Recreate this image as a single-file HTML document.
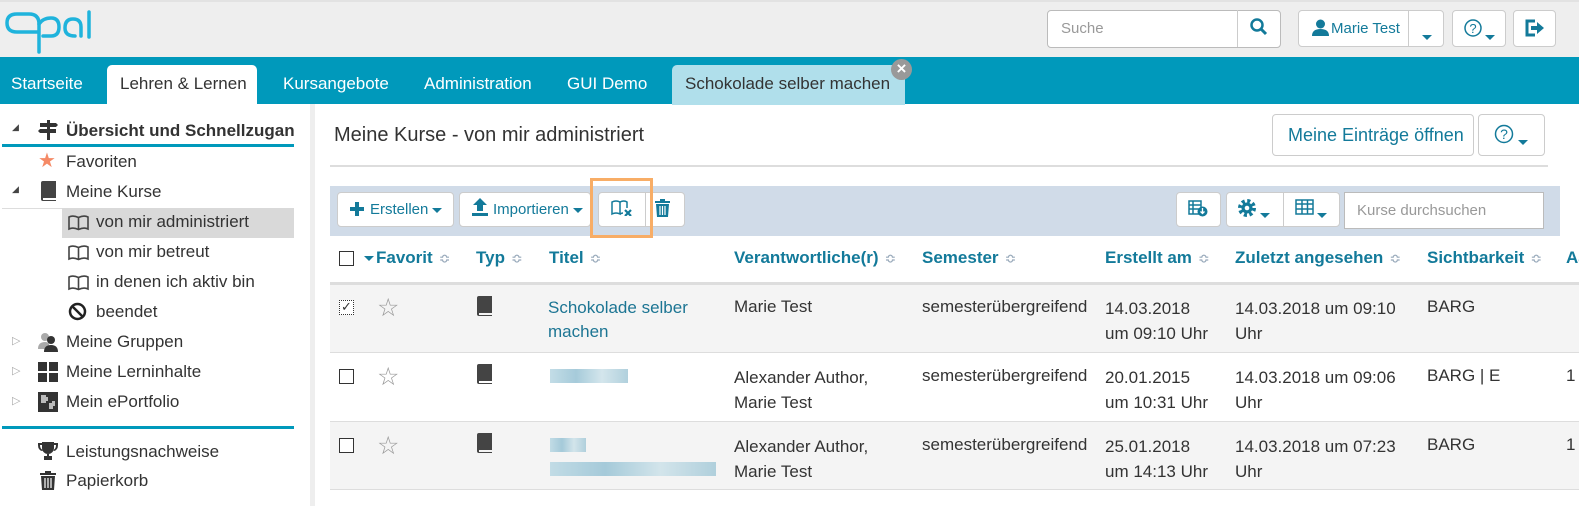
<!DOCTYPE html>
<html><head><meta charset="utf-8"><style>
*{box-sizing:border-box;margin:0;padding:0}
body{width:1579px;height:506px;overflow:hidden;background:#fff;font-family:"Liberation Sans",sans-serif;font-size:17px;color:#333;position:relative}
.a{position:absolute;white-space:nowrap}
.btn{position:absolute;background:#fff;border:1px solid #ccc;border-radius:4px}
.lk{color:#1c7593}
.th{position:absolute;top:248px;font-weight:bold;color:#137a9a;font-size:17px;white-space:nowrap}
.so{color:#9ab;font-weight:normal;font-size:14px;margin-left:6px}
.cb{position:absolute;width:15px;height:15px;border:1px solid #333;background:#fff}
.caret{display:inline-block;border-left:5px solid transparent;border-right:5px solid transparent;border-top:5px solid #137a9a;vertical-align:middle;margin-left:4px}
.blur{position:absolute;background:linear-gradient(90deg,#bcd9e4,#9cc5d6,#cfe3ea,#a8cbd9);opacity:.9}
</style></head><body>
<!-- header -->
<div class="a" style="left:0;top:0;width:1579px;height:57px;background:#eee;border-top:2px solid #e2e2e2"></div>
<svg class="a" style="left:3px;top:8px" width="92" height="46" viewBox="0 0 92 46"><g fill="none" stroke="#1fb3dc" stroke-width="3.5" stroke-linecap="round"><path d="M34 24 H14 Q4 24 4 15 Q4 6 14 6 H26 Q36 6 36 16 V44"/><path d="M36 16 Q40 10 48 10 Q56 10 56 19 Q56 28 48 28 H40"/><path d="M72 28 Q62 28 62 20 Q62 11 70 11 Q78 11 78 19 V28"/><path d="M86 4 V29"/></g></svg>
<div class="btn" style="left:1047px;top:10px;width:234px;height:38px;border-color:#bbb"></div>
<div class="a" style="left:1237px;top:10px;width:1px;height:37px;background:#ccc"></div>
<div class="a" style="left:1061px;top:20px;color:#999;font-size:15px">Suche</div>
<svg class="a" style="left:1250px;top:18px" width="18" height="18" viewBox="0 0 18 18"><circle cx="7" cy="7" r="5.5" fill="none" stroke="#137a9a" stroke-width="2.5"/><path d="M11 11 L16 16" stroke="#137a9a" stroke-width="3"/></svg>
<div class="btn" style="left:1298px;top:10px;width:146px;height:37px"></div>
<div class="a" style="left:1408px;top:10px;width:1px;height:37px;background:#ccc"></div>
<svg class="a" style="left:1312px;top:19px" width="17" height="17" viewBox="0 0 17 17"><circle cx="8.5" cy="5" r="4.5" fill="#137a9a"/><path d="M0 17 Q0 10 8.5 10 Q17 10 17 17Z" fill="#137a9a"/></svg>
<div class="a" style="left:1331px;top:20px;font-size:15px;color:#137a9a">Marie Test</div>
<div class="a" style="left:1422px;top:27px"><span class="caret" style="margin:0"></span></div>
<div class="btn" style="left:1452px;top:10px;width:54px;height:37px"></div>
<svg class="a" style="left:1464px;top:19px" width="18" height="18" viewBox="0 0 18 18"><circle cx="9" cy="9" r="8" fill="none" stroke="#137a9a" stroke-width="1.5"/><text x="9" y="14" font-size="13" text-anchor="middle" fill="#137a9a" font-family="Liberation Sans">?</text></svg>
<div class="a" style="left:1485px;top:27px"><span class="caret" style="margin:0"></span></div>
<div class="btn" style="left:1513px;top:10px;width:43px;height:37px"></div>
<svg class="a" style="left:1525px;top:19px" width="20" height="18" viewBox="0 0 20 18"><path d="M10 2 H2 V16 H10" fill="none" stroke="#137a9a" stroke-width="3"/><path d="M6 7 H12 V3 L19 9 L12 15 V11 H6Z" fill="#137a9a"/></svg>
<!-- nav -->
<div class="a" style="left:0;top:57px;width:1579px;height:47px;background:#0099bb"></div>
<div class="a" style="left:11px;top:74px;color:#fff">Startseite</div>
<div class="a" style="left:107px;top:65px;width:150px;height:40px;background:#fff;border-radius:5px 5px 0 0"></div>
<div class="a" style="left:120px;top:74px;color:#333">Lehren &amp; Lernen</div>
<div class="a" style="left:283px;top:74px;color:#fff">Kursangebote</div>
<div class="a" style="left:424px;top:74px;color:#fff">Administration</div>
<div class="a" style="left:567px;top:74px;color:#fff">GUI Demo</div>
<div class="a" style="left:672px;top:65px;width:233px;height:40px;background:#b0dfeb;border-radius:5px 5px 0 0"></div>
<div class="a" style="left:685px;top:74px;color:#333">Schokolade selber machen</div>
<div class="a" style="left:891px;top:59px;width:21px;height:21px;border-radius:50%;background:#999;color:#fff;font-size:17px;font-weight:bold;text-align:center;line-height:20px">×</div>
<!-- sidebar -->
<div class="a" style="left:310px;top:104px;width:5px;height:402px;background:#eee"></div>
<div class="a" style="left:12px;top:122px;font-size:9px;color:#444">◢</div>
<svg class="a" style="left:38px;top:120px" width="20" height="20" viewBox="0 0 20 20"><path d="M9 0h3v20h-3z M2 3h16l2 2-2 2H2z M0 11l2-2h16v4H2z" fill="#333"/></svg>
<div class="a" style="left:66px;top:121px;font-weight:bold;width:228px;overflow:hidden">Übersicht und Schnellzugang</div>
<div class="a" style="left:2px;top:144px;width:292px;height:3px;background:#0099bb"></div>
<div class="a" style="left:38px;top:150px;font-size:20px;color:#f58a66;line-height:22px">★</div>
<div class="a" style="left:66px;top:152px">Favoriten</div>
<div class="a" style="left:12px;top:184px;font-size:9px;color:#444">◢</div>
<svg class="a" style="left:40px;top:181px" width="17" height="20" viewBox="0 0 17 20"><path d="M1 2 Q1 0 3 0 H16 V17 H3 V19 H16 V20 H3 Q1 20 1 18Z" fill="#444"/></svg>
<div class="a" style="left:66px;top:182px">Meine Kurse</div>
<div class="a" style="left:2px;top:208px;width:60px;height:1px;background:#ddd"></div>
<div class="a" style="left:62px;top:208px;width:232px;height:30px;background:#d9d9d9"></div>
<svg class="a" style="left:68px;top:215px" width="21" height="16" viewBox="0 0 21 16"><path d="M1 2 Q5 0 10.5 2.5 Q16 0 20 2 V14 Q16 12 10.5 14.5 Q5 12 1 14Z M10.5 2.5 V14.5" fill="none" stroke="#444" stroke-width="1.6"/></svg>
<div class="a" style="left:96px;top:212px">von mir administriert</div>
<svg class="a" style="left:68px;top:245px" width="21" height="16" viewBox="0 0 21 16"><path d="M1 2 Q5 0 10.5 2.5 Q16 0 20 2 V14 Q16 12 10.5 14.5 Q5 12 1 14Z M10.5 2.5 V14.5" fill="none" stroke="#444" stroke-width="1.6"/></svg>
<div class="a" style="left:96px;top:242px">von mir betreut</div>
<svg class="a" style="left:68px;top:275px" width="21" height="16" viewBox="0 0 21 16"><path d="M1 2 Q5 0 10.5 2.5 Q16 0 20 2 V14 Q16 12 10.5 14.5 Q5 12 1 14Z M10.5 2.5 V14.5" fill="none" stroke="#444" stroke-width="1.6"/></svg>
<div class="a" style="left:96px;top:272px">in denen ich aktiv bin</div>
<svg class="a" style="left:68px;top:302px" width="19" height="19" viewBox="0 0 19 19"><circle cx="9.5" cy="9.5" r="7.5" fill="none" stroke="#222" stroke-width="2.5"/><path d="M4 4 L15 15" stroke="#222" stroke-width="2.5"/></svg>
<div class="a" style="left:96px;top:302px">beendet</div>
<div class="a" style="left:12px;top:334px;font-size:11px;color:#aaa">▷</div>
<svg class="a" style="left:38px;top:332px" width="20" height="20" viewBox="0 0 20 20"><circle cx="7" cy="5" r="4" fill="#aaa"/><path d="M0 17 Q0 10 7 10 Q10 10 11 12 V17Z" fill="#aaa"/><circle cx="13" cy="8" r="4" fill="#333"/><path d="M6 20 Q6 13 13 13 Q20 13 20 20Z" fill="#333"/></svg>
<div class="a" style="left:66px;top:332px">Meine Gruppen</div>
<div class="a" style="left:12px;top:364px;font-size:11px;color:#aaa">▷</div>
<svg class="a" style="left:38px;top:362px" width="20" height="20" viewBox="0 0 20 20"><path d="M0 0h9v9H0z M11 0h9v9h-9z M0 11h9v9H0z M11 11h9v9h-9z" fill="#333"/></svg>
<div class="a" style="left:66px;top:362px">Meine Lerninhalte</div>
<div class="a" style="left:12px;top:394px;font-size:11px;color:#aaa">▷</div>
<svg class="a" style="left:38px;top:392px" width="20" height="20" viewBox="0 0 20 20"><rect width="20" height="20" fill="#333"/><path d="M3 3h5v2h2v4H8v2H3z M11 11h3v-2h3v5h-2v3h-4z" fill="#bbb"/></svg>
<div class="a" style="left:66px;top:392px">Mein ePortfolio</div>
<div class="a" style="left:2px;top:426px;width:292px;height:3px;background:#0099bb"></div>
<svg class="a" style="left:38px;top:442px" width="20" height="18" viewBox="0 0 20 18"><path d="M4 0h12v6a6 6 0 0 1-12 0z M0 1h4v2H2q0 4 3 5l-1 1Q0 8 0 3z M20 1h-4v2h2q0 4-3 5l1 1q4-1 4-6z M9 11h2v3h3v4H6v-4h3z" fill="#333"/></svg>
<div class="a" style="left:66px;top:442px">Leistungsnachweise</div>
<svg class="a" style="left:40px;top:471px" width="16" height="19" viewBox="0 0 16 19"><path d="M0 2h5V0h6v2h5v2H0z M1 5h14l-1 14H2z" fill="#333"/><path d="M5 7v10 M8 7v10 M11 7v10" stroke="#fff" stroke-width="1.2"/></svg>
<div class="a" style="left:66px;top:471px">Papierkorb</div>
<!-- main -->
<div class="a" style="left:334px;top:124px;font-size:20px;color:#333">Meine Kurse - von mir administriert</div>
<div class="btn" style="left:1272px;top:114px;width:202px;height:42px"></div>
<div class="a" style="left:1288px;top:125px;font-size:18px;color:#137a9a">Meine Einträge öffnen</div>
<div class="btn" style="left:1478px;top:114px;width:67px;height:42px"></div>
<svg class="a" style="left:1494px;top:124px" width="20" height="20" viewBox="0 0 20 20"><circle cx="10" cy="10" r="8.5" fill="none" stroke="#137a9a" stroke-width="1.5"/><text x="10" y="15" font-size="14" text-anchor="middle" fill="#137a9a" font-family="Liberation Sans">?</text></svg>
<div class="a" style="left:1518px;top:132px"><span class="caret" style="margin:0"></span></div>
<div class="a" style="left:330px;top:165px;width:1218px;height:2px;background:#ddd"></div>
<!-- toolbar -->
<div class="a" style="left:330px;top:186px;width:1230px;height:50px;background:#d0dbe8"></div>
<div class="btn" style="left:337px;top:192px;width:117px;height:35px"></div>
<svg class="a" style="left:350px;top:202px" width="14" height="14" viewBox="0 0 14 14"><path d="M5 0h4v5h5v4H9v5H5V9H0V5h5z" fill="#137a9a"/></svg>
<div class="a" style="left:370px;top:201px;font-size:15px;color:#137a9a">Erstellen<span class="caret"></span></div>
<div class="btn" style="left:459px;top:192px;width:132px;height:35px"></div>
<svg class="a" style="left:472px;top:198px" width="16" height="18" viewBox="0 0 16 18"><path d="M8 0 L15 7 H11 V13 H5 V7 H1Z M0 15h16v3H0z" fill="#137a9a"/></svg>
<div class="a" style="left:493px;top:201px;font-size:15px;color:#137a9a">Importieren<span class="caret"></span></div>
<div class="btn" style="left:598px;top:192px;width:87px;height:35px"></div>
<div class="a" style="left:645px;top:192px;width:1px;height:35px;background:#ccc"></div>
<svg class="a" style="left:611px;top:200px" width="22" height="16" viewBox="0 0 22 16"><path d="M1 2 Q5 0 9 2 V14 Q5 12 1 14Z M9 2 Q13 0 16 2 V8 M9 14 Q11 13 12 13" fill="none" stroke="#137a9a" stroke-width="1.5"/><path d="M14 10 L20 16 M20 10 L14 16" stroke="#137a9a" stroke-width="2.2"/></svg>
<svg class="a" style="left:655px;top:199px" width="15" height="18" viewBox="0 0 15 18"><path d="M0 2h5V0h5v2h5v2H0z M1 5h13l-1 13H2z" fill="#137a9a"/><path d="M5 7v9 M7.5 7v9 M10 7v9" stroke="#fff" stroke-width="1.2"/></svg>
<div class="a" style="left:590px;top:178px;width:63px;height:60px;border:3px solid #f8ad66"></div>
<div class="btn" style="left:1176px;top:192px;width:45px;height:35px"></div>
<svg class="a" style="left:1188px;top:200px" width="20" height="17" viewBox="0 0 20 17"><path d="M1 1h12v13H1z M1 5h12 M1 9h12 M5 1v13" fill="none" stroke="#137a9a" stroke-width="1.5"/><circle cx="14.5" cy="11.5" r="5" fill="#137a9a"/><path d="M14.5 8v5 M12.5 11.5l2 2 2-2" stroke="#fff" stroke-width="1.3" fill="none"/></svg>
<div class="btn" style="left:1226px;top:192px;width:114px;height:35px"></div>
<div class="a" style="left:1283px;top:192px;width:1px;height:35px;background:#ccc"></div>
<svg class="a" style="left:1238px;top:199px" width="18" height="18" viewBox="0 0 18 18"><circle cx="9" cy="9" r="7" fill="none" stroke="#137a9a" stroke-width="4" stroke-dasharray="3 2.5"/><circle cx="9" cy="9" r="5.5" fill="#137a9a"/><circle cx="9" cy="9" r="2.3" fill="#fff"/></svg>
<div class="a" style="left:1256px;top:205px"><span class="caret"></span></div>
<svg class="a" style="left:1295px;top:199px" width="19" height="16" viewBox="0 0 19 16"><path d="M1 1h17v14H1z M1 5h17 M1 10h17 M7 1v14 M12.5 1v14" fill="none" stroke="#137a9a" stroke-width="1.5"/></svg>
<div class="a" style="left:1313px;top:205px"><span class="caret"></span></div>
<div class="a" style="left:1344px;top:192px;width:200px;height:37px;background:#fff;border:1px solid #bbb"></div>
<div class="a" style="left:1357px;top:202px;color:#999;font-size:15px">Kurse durchsuchen</div>
<!-- table header -->
<div class="cb" style="left:339px;top:251px"></div>
<div class="th" style="left:364px"><span class="caret" style="margin:0 2px 0 0"></span>Favorit<span class="so">≎</span></div>
<div class="th" style="left:476px">Typ<span class="so">≎</span></div>
<div class="th" style="left:549px">Titel<span class="so">≎</span></div>
<div class="th" style="left:734px">Verantwortliche(r)<span class="so">≎</span></div>
<div class="th" style="left:922px">Semester<span class="so">≎</span></div>
<div class="th" style="left:1105px">Erstellt am<span class="so">≎</span></div>
<div class="th" style="left:1235px">Zuletzt angesehen<span class="so">≎</span></div>
<div class="th" style="left:1427px">Sichtbarkeit<span class="so">≎</span></div>
<div class="th" style="left:1566px">Aa</div>
<div class="a" style="left:330px;top:282px;width:1249px;height:3px;background:#ddd"></div>
<!-- rows -->
<div class="a" style="left:330px;top:285px;width:1249px;height:67px;background:#f4f4f4"></div>
<div class="a" style="left:330px;top:352px;width:1249px;height:1px;background:#ddd"></div>
<div class="a" style="left:330px;top:421px;width:1249px;height:69px;background:#f4f4f4;border-top:1px solid #ddd;border-bottom:1px solid #ddd"></div>
<div class="cb" style="left:339px;top:300px;border-style:dotted;font-size:13px;line-height:12px;text-align:center">✓</div>
<div class="cb" style="left:339px;top:369px"></div>
<div class="cb" style="left:339px;top:438px"></div>
<div class="a" style="left:377px;top:293px;font-size:25px;color:#999">☆</div>
<div class="a" style="left:377px;top:362px;font-size:25px;color:#999">☆</div>
<div class="a" style="left:377px;top:431px;font-size:25px;color:#999">☆</div>
<svg class="a" style="left:476px;top:296px" width="17" height="20" viewBox="0 0 17 20"><path d="M1 2 Q1 0 3 0 H16 V17 H3 V19 H16 V20 H3 Q1 20 1 18Z" fill="#444"/></svg>
<svg class="a" style="left:476px;top:364px" width="17" height="20" viewBox="0 0 17 20"><path d="M1 2 Q1 0 3 0 H16 V17 H3 V19 H16 V20 H3 Q1 20 1 18Z" fill="#444"/></svg>
<svg class="a" style="left:476px;top:433px" width="17" height="20" viewBox="0 0 17 20"><path d="M1 2 Q1 0 3 0 H16 V17 H3 V19 H16 V20 H3 Q1 20 1 18Z" fill="#444"/></svg>
<div class="a lk" style="left:548px;top:296px;line-height:24px">Schokolade selber<br>machen</div>
<div class="blur" style="left:550px;top:369px;width:78px;height:14px"></div>
<div class="blur" style="left:550px;top:438px;width:36px;height:14px"></div>
<div class="blur" style="left:550px;top:462px;width:166px;height:14px"></div>
<div class="a" style="left:734px;top:297px">Marie Test</div>
<div class="a" style="left:734px;top:365px;line-height:25px">Alexander Author,<br>Marie Test</div>
<div class="a" style="left:734px;top:434px;line-height:25px">Alexander Author,<br>Marie Test</div>
<div class="a" style="left:922px;top:297px">semesterübergreifend</div>
<div class="a" style="left:922px;top:366px">semesterübergreifend</div>
<div class="a" style="left:922px;top:435px">semesterübergreifend</div>
<div class="a" style="left:1105px;top:296px;line-height:25px">14.03.2018<br>um 09:10 Uhr</div>
<div class="a" style="left:1105px;top:365px;line-height:25px">20.01.2015<br>um 10:31 Uhr</div>
<div class="a" style="left:1105px;top:434px;line-height:25px">25.01.2018<br>um 14:13 Uhr</div>
<div class="a" style="left:1235px;top:296px;line-height:25px">14.03.2018 um 09:10<br>Uhr</div>
<div class="a" style="left:1235px;top:365px;line-height:25px">14.03.2018 um 09:06<br>Uhr</div>
<div class="a" style="left:1235px;top:434px;line-height:25px">14.03.2018 um 07:23<br>Uhr</div>
<div class="a" style="left:1427px;top:297px">BARG</div>
<div class="a" style="left:1427px;top:366px">BARG | E</div>
<div class="a" style="left:1427px;top:435px">BARG</div>
<div class="a" style="left:1566px;top:366px">1</div>
<div class="a" style="left:1566px;top:435px">1</div>
</body></html>
